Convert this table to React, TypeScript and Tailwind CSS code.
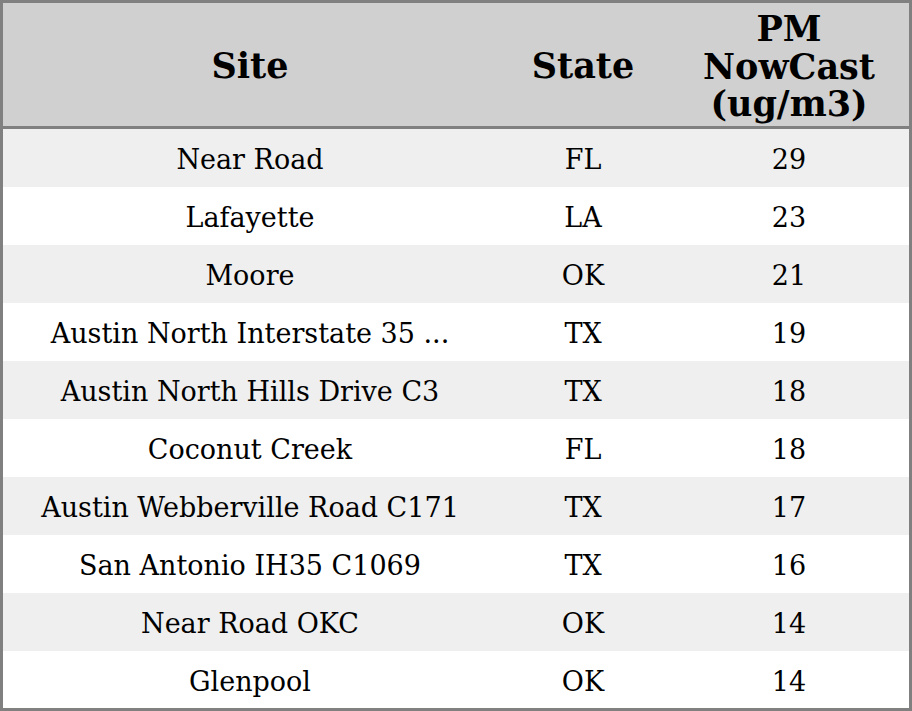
import React from "react";

const rows: [string, string, string][] = [
  ["Near Road", "FL", "29"],
  ["Lafayette", "LA", "23"],
  ["Moore", "OK", "21"],
  ["Austin North Interstate 35 ...", "TX", "19"],
  ["Austin North Hills Drive C3", "TX", "18"],
  ["Coconut Creek", "FL", "18"],
  ["Austin Webberville Road C171", "TX", "17"],
  ["San Antonio IH35 C1069", "TX", "16"],
  ["Near Road OKC", "OK", "14"],
  ["Glenpool", "OK", "14"],
];

export default function App() {
  return (
    <div
      className="w-[912px] h-[711px] border-[3px] border-[#808080] flex flex-col bg-white text-black"
      style={{ fontFamily: '"DejaVu Serif", serif' }}
    >
      <div className="h-[126px] shrink-0 grid grid-cols-[494px_172px_240px] pt-[4px] bg-[#d0d0d0] border-b-[3px] border-[#808080] font-bold text-[35px]">
        <div className="flex items-center justify-center">Site</div>
        <div className="flex items-center justify-center">State</div>
        <div className="flex items-center justify-center text-center leading-[37.5px]">
          PM
          <br />
          NowCast
          <br />
          (ug/m3)
        </div>
      </div>
      <div className="flex-1 flex flex-col text-[27px]">
        {rows.map((r, i) => (
          <div
            key={i}
            className={`${i === rows.length - 1 ? "flex-1" : "h-[58px] shrink-0"} grid grid-cols-[494px_172px_240px] items-center text-center pt-[5px] ${
              i % 2 === 0 ? "bg-[#efefef]" : "bg-white"
            }`}
          >
            <div>{r[0]}</div>
            <div>{r[1]}</div>
            <div>{r[2]}</div>
          </div>
        ))}
      </div>
    </div>
  );
}
